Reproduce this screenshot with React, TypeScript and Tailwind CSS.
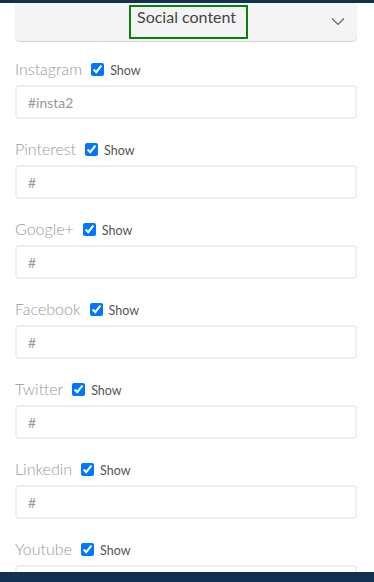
import React from "react";

const items = [
  { name: "Instagram", value: "#insta2" },
  { name: "Pinterest", value: "#" },
  { name: "Google+", value: "#" },
  { name: "Facebook", value: "#" },
  { name: "Twitter", value: "#" },
  { name: "Linkedin", value: "#" },
  { name: "Youtube", value: "" },
];

export default function App() {
  return (
    <div className="h-[582px] w-[374px] overflow-hidden flex flex-col bg-white" style={{ fontFamily: "Lato, 'Open Sans', sans-serif" }}>
      <div className="h-[3px] bg-[#12304f] shrink-0" />
      <div className="flex-1 overflow-hidden px-[15px] pr-[17px]">
        <div className="h-[38px] bg-[#f4f4f4] rounded-b-[5px] shadow-[0_1px_1px_rgba(0,0,0,0.18)] flex items-center relative">
          <div className="absolute left-[114px] top-[2px] w-[119px] h-[34px] border-2 border-[#0a7f0a] pl-[6px] text-[16px] leading-[20px] text-[#444]">
            Social content
          </div>
          <svg className="absolute right-[12px] top-[14px]" width="14" height="9" viewBox="0 0 14 9" fill="none">
            <path d="M1 1.5 L7 7.5 L13 1.5" stroke="#666" strokeWidth="1.2" />
          </svg>
        </div>
        <div className="pt-[18px]">
          {items.map((it) => (
            <div key={it.name} className="mb-[20px]">
              <div className="h-[20px] flex items-center">
                <span className="text-[16px] font-light text-[#999] leading-[20px]">{it.name}</span>
                <input type="checkbox" defaultChecked className="ml-[9px] w-[13px] h-[13px] m-0" />
                <span className="ml-[6px] text-[12.5px] font-normal text-[#555] leading-[20px] pt-[3px]">Show</span>
              </div>
              <div className="mt-[6px] h-[34px] border-2 border-[#efefef] rounded-[4px] flex items-center pl-[11px] text-[14px] text-[#999]">
                {it.value}
              </div>
            </div>
          ))}
        </div>
      </div>
      <div className="h-[10px] bg-[#12304f] shrink-0" />
    </div>
  );
}
